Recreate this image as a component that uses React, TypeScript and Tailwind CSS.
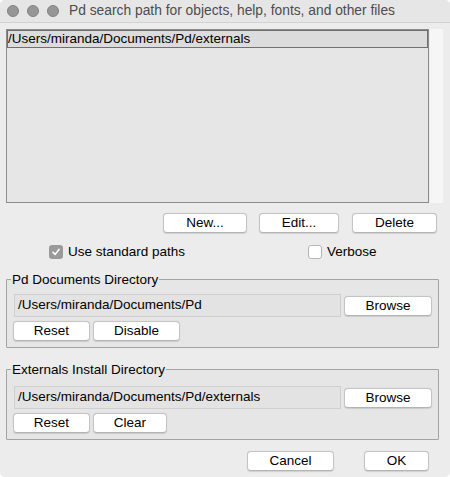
import type { ReactNode } from 'react'

function MacButton({ children, className = '' }: { children: ReactNode; className?: string }) {
  return (
    <button
      className={`h-[20px] rounded-[4px] border border-[#c4c4c4] border-b-[#b4b4b4] bg-white text-[13.5px] leading-none text-black shadow-[0_0.5px_1px_rgba(0,0,0,0.12)] ${className}`}
    >
      {children}
    </button>
  )
}

function Checkbox({ checked }: { checked: boolean }) {
  if (checked) {
    return (
      <span className="flex h-[14px] w-[14px] items-center justify-center rounded-[3px] bg-[#9a9a9a]">
        <svg width="10" height="10" viewBox="0 0 10 10">
          <path d="M2 5.3 L4.1 7.5 L8 2.4" fill="none" stroke="white" strokeWidth="1.6" strokeLinecap="round" strokeLinejoin="round" />
        </svg>
      </span>
    )
  }
  return <span className="block h-[14px] w-[14px] rounded-[3px] border border-[#b5b5b5] bg-white" />
}

function PathGroup({ title, path, second, secondWidth, entryGap }: { title: string; path: string; second: string; secondWidth: string; entryGap: string }) {
  return (
    <fieldset className="w-[433px] rounded-[1px] border border-[#a3a3a3] bg-[#e6e6e6] pb-[6px]">
      <legend className="ml-[4px] px-[1px] text-[13.5px] leading-[15px] text-black">{title}</legend>
      <div className={`flex items-start pl-[7px] ${entryGap}`}>
        <div className="flex h-[23px] w-[327px] items-center border border-[#cfcfcf] bg-[#e3e3e3] pl-[3px] text-[13.5px] text-black">
          {path}
        </div>
        <MacButton className="ml-[3px] mt-[2px] w-[88px]">Browse</MacButton>
      </div>
      <div className="mt-[4px] flex gap-[3px] pl-[6px]">
        <MacButton className="w-[77px]">Reset</MacButton>
        <MacButton className={secondWidth}>{second}</MacButton>
      </div>
    </fieldset>
  )
}

export default function App() {
  return (
    <div className="h-[477px] w-[450px] overflow-hidden rounded-[5px] bg-[#ececec] font-['Liberation_Sans',Arial,sans-serif] text-black">
      {/* Title bar */}
      <div className="flex h-[23px] items-center border-b border-[#d2d2d2] bg-[#e6e6e6]">
        <div className="ml-[7px] flex gap-[8px]">
          <span className="h-[12px] w-[12px] rounded-full border border-[#838383] bg-[#969696]" />
          <span className="h-[12px] w-[12px] rounded-full border border-[#838383] bg-[#969696]" />
          <span className="h-[12px] w-[12px] rounded-full border border-[#838383] bg-[#969696]" />
        </div>
        <span className="ml-[10px] text-[13.8px] text-[#4d4d4d]">Pd search path for objects, help, fonts, and other files</span>
      </div>

      <div className="pl-[6px]">
        {/* Path list */}
        <div className="mt-[6px] flex">
          <div className="h-[174px] w-[423px] border border-[#8c8c8c] bg-[#e6e6e6]">
            <div className="flex h-[18px] items-center border border-[#707070] bg-[#dcdcdc] text-[13.5px] leading-none">
              /Users/miranda/Documents/Pd/externals
            </div>
          </div>
          <div className="ml-[1px] h-[174px] w-[13px] bg-[#f6f6f6]" />
        </div>

        {/* List buttons */}
        <div className="mt-[10px] flex">
          <MacButton className="ml-[157px] w-[84px]">New...</MacButton>
          <MacButton className="ml-[12px] w-[80px]">Edit...</MacButton>
          <MacButton className="ml-[13px] w-[85px]">Delete</MacButton>
        </div>

        {/* Options */}
        <div className="mt-[12px] flex h-[14px] items-center text-[13.5px]">
          <span className="ml-[43px]">
            <Checkbox checked />
          </span>
          <span className="ml-[5px] w-[240px]">Use standard paths</span>
          <span>
            <Checkbox checked={false} />
          </span>
          <span className="ml-[5px]">Verbose</span>
        </div>

        <div className="mt-[13px]">
          <PathGroup
            title="Pd Documents Directory"
            path="/Users/miranda/Documents/Pd"
            second="Disable"
            secondWidth="w-[87px]"
            entryGap="mt-[7px]"
          />
        </div>

        <div className="mt-[14px]">
          <PathGroup
            title="Externals Install Directory"
            path="/Users/miranda/Documents/Pd/externals"
            second="Clear"
            secondWidth="w-[74px]"
            entryGap="mt-[9px]"
          />
        </div>

        {/* Dialog buttons */}
        <div className="mt-[11px] flex">
          <MacButton className="ml-[241px] w-[87px]">Cancel</MacButton>
          <MacButton className="ml-[30px] w-[65px]">OK</MacButton>
        </div>
      </div>
    </div>
  )
}
